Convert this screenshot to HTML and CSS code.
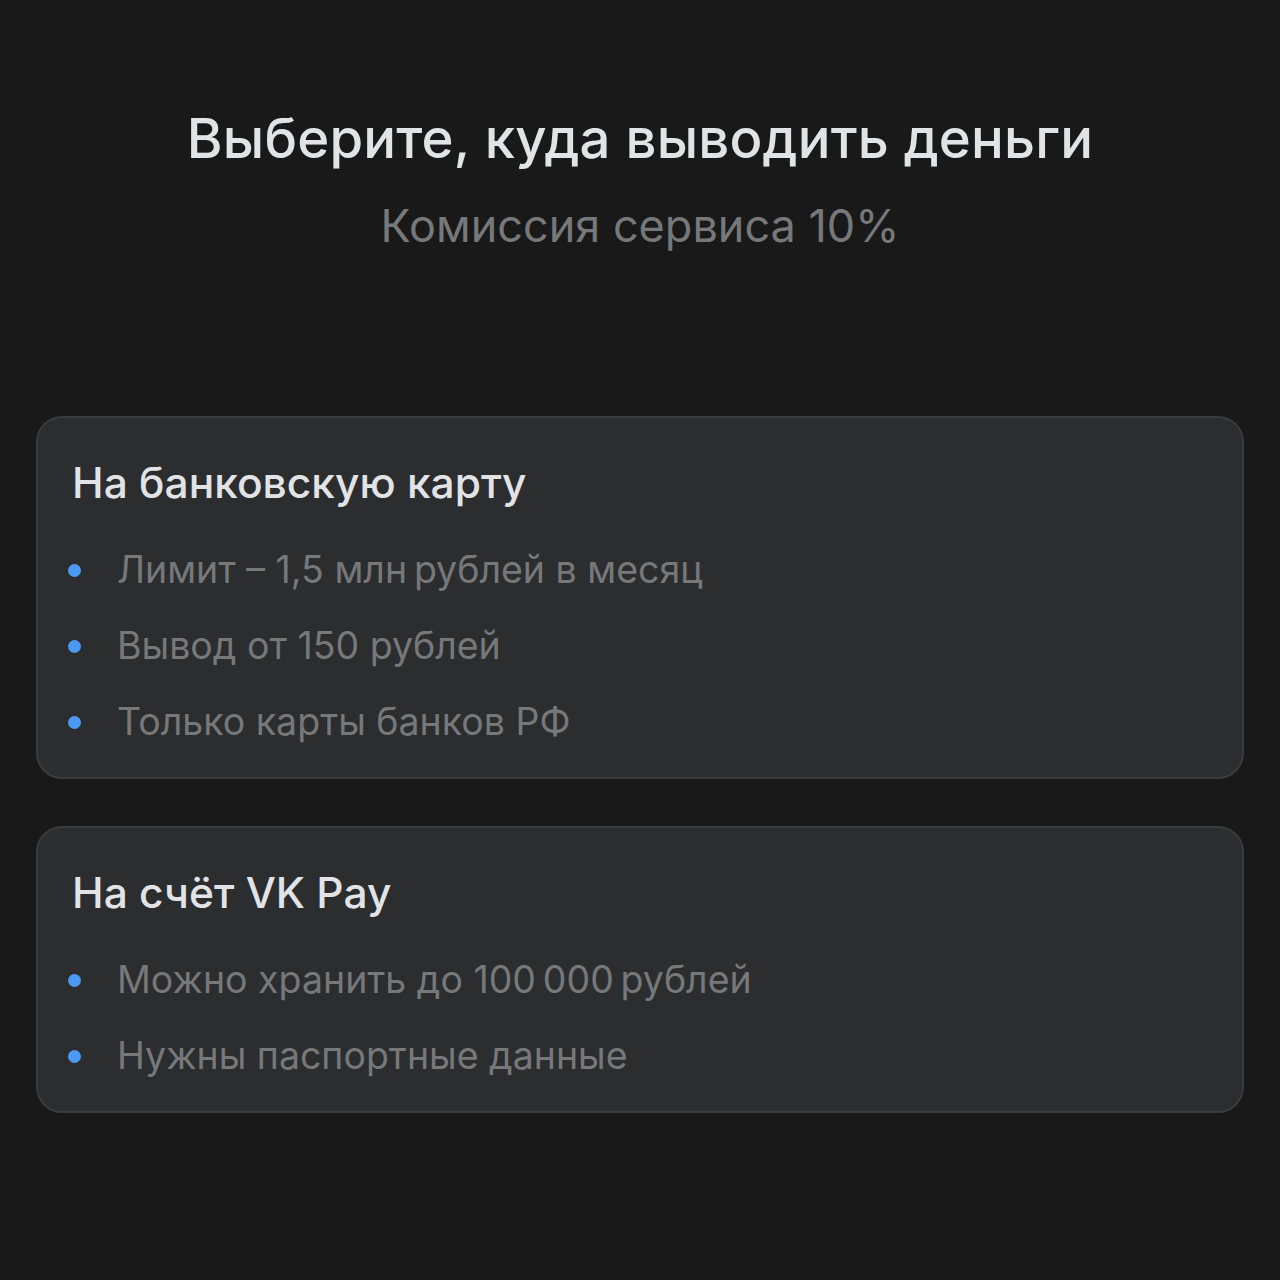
FILE: index.html
```html
<!DOCTYPE html>
<html lang="ru">
<head>
    <meta charset="UTF-8">
    <meta name="viewport" content="width=device-width, initial-scale=1.0">
    <title>Вывод денег</title>
    <link rel="stylesheet" href="styles.css">
</head>
<body>
    <div class="pagina">
        <div class="cabecera">
            <h1 class="titulo">Выберите, куда выводить деньги</h1>
            <p class="subtitulo">Комиссия сервиса 10%</p>
        </div>
        <div class="opciones">
            <div class="tarjeta">
                <h2>На банковскую карту</h2>
                <ul>
                    <li>Лимит – 1,5 млн&thinsp;рублей в месяц</li>
                    <li>Вывод от 150 рублей</li>
                    <li>Только карты банков РФ</li>
                </ul>
            </div>
            <div class="tarjeta">
                <h2>На счёт VK Pay</h2>
                <ul>
                    <li>Можно хранить до 100&thinsp;000&thinsp;рублей</li>
                    <li>Нужны паспортные данные</li>
                </ul>
            </div>
        </div>
    </div>
</body>
</html>
```

FILE: styles.css
```css
body{
    margin: 0;
    padding: 0;
    background-color: #19191a;
    font-family: Inter, Roboto, "Noto Sans", sans-serif;
    -webkit-font-smoothing: antialiased;
}
.pagina{
    width: 1280px;
    height: 1280px;
    box-sizing: border-box;
    padding: 106px 36px 0 36px;
}
.cabecera{
    text-align: center;
}
.titulo{
    margin: 0;
    font-size: 54.5px;
    font-weight: 500;
    line-height: 64px;
    color: #e1e3e6;
    letter-spacing: 0.2px;
}
.subtitulo{
    margin: 31px 0 0 0;
    font-size: 45px;
    font-weight: 400;
    line-height: 50px;
    color: #76787a;
}
.opciones{
    margin-top: 165px;
    display: flex;
    flex-direction: column;
    gap: 47px;
}
.tarjeta{
    background-color: #2c2d2f;
    border: 2px solid #3a3b3d;
    border-radius: 26px;
    padding: 38px 34px 17px 34px;
}
.tarjeta h2{
    margin: 0;
    font-size: 42.5px;
    font-weight: 500;
    line-height: 54px;
    color: #e1e3e6;
}
.tarjeta ul{
    list-style: none;
    margin: 22px 0 0 0;
    padding: 0;
}
.tarjeta li{
    display: flex;
    align-items: center;
    gap: 36px;
    font-size: 37.5px;
    line-height: 76px;
    color: #76787a;
}
.tarjeta li::before{
    content: "";
    width: 13px;
    height: 13px;
    margin-left: -4px;
    border-radius: 50%;
    background-color: #4a9af4;
    flex-shrink: 0;
}
```
